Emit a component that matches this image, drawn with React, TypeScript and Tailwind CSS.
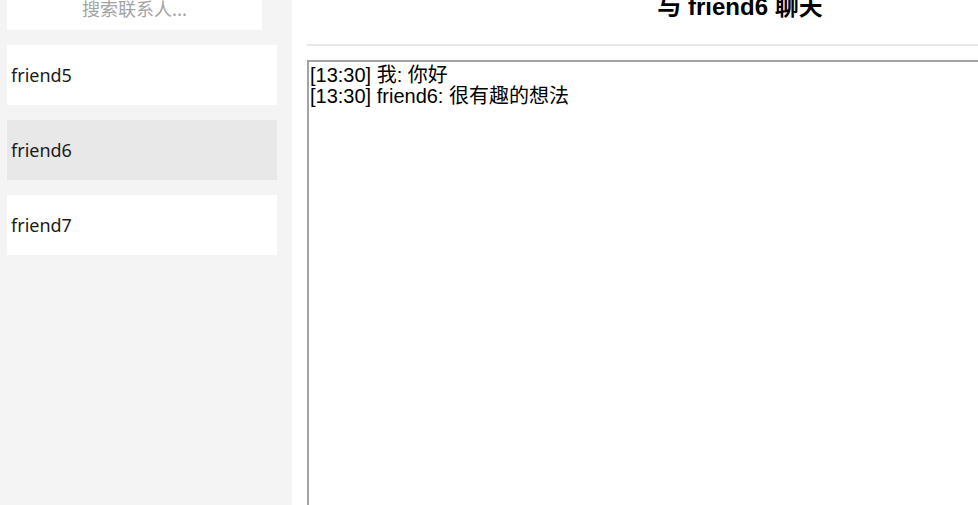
import React from 'react'

const CONTACTS = ['friend5', 'friend6', 'friend7']
const ACTIVE = 'friend6'

const MESSAGES = '[13:30] 我: 你好\n[13:30] friend6: 很有趣的想法'

export default function App() {
  return (
    <div className="w-[978px] h-screen overflow-hidden bg-white">
      {/* page is scrolled a little, so everything sits 22px higher */}
      <div className="flex h-[560px] -mt-[22px]">
        {/* Sidebar */}
        <aside className="w-[292px] shrink-0 bg-[#f4f4f4] pt-[7px] pl-[7px] pr-[15px] flex flex-col gap-[15px] font-['Noto_Sans','Noto_Sans_CJK_SC',sans-serif]">
          <input
            placeholder="搜索联系人..."
            className="w-[255px] h-[45px] shrink-0 bg-white text-center text-[18px] outline-none placeholder:text-[#a3a3a3] font-['Noto_Sans_CJK_SC',sans-serif]"
          />
          {CONTACTS.map((name) => (
            <div
              key={name}
              className={`h-[60px] shrink-0 flex items-center px-[4px] text-[18px] text-[#1a1a1a] ${
                name === ACTIVE ? 'bg-[#e8e8e8]' : 'bg-white'
              }`}
            >
              {name}
            </div>
          ))}
        </aside>

        {/* Chat */}
        <main className="w-[896px] shrink-0 px-[15px] pt-[15px] flex flex-col">
          <div className="pb-[23px] border-b-2 border-[#e8e8e8]">
            <h2 className="text-center text-[24px] leading-[28px] font-bold text-black font-['Liberation_Sans','Noto_Sans_CJK_SC',sans-serif]">
              与 {ACTIVE} 聊天
            </h2>
          </div>
          <textarea
            readOnly
            value={MESSAGES}
            className="mt-[14px] w-full h-[500px] shrink-0 resize-none border-2 border-[#a3a3a3] px-[1px] py-[3px] text-[20px] leading-[21px] text-black outline-none font-['Liberation_Sans','Noto_Sans_CJK_SC',sans-serif]"
          />
        </main>
      </div>
    </div>
  )
}
